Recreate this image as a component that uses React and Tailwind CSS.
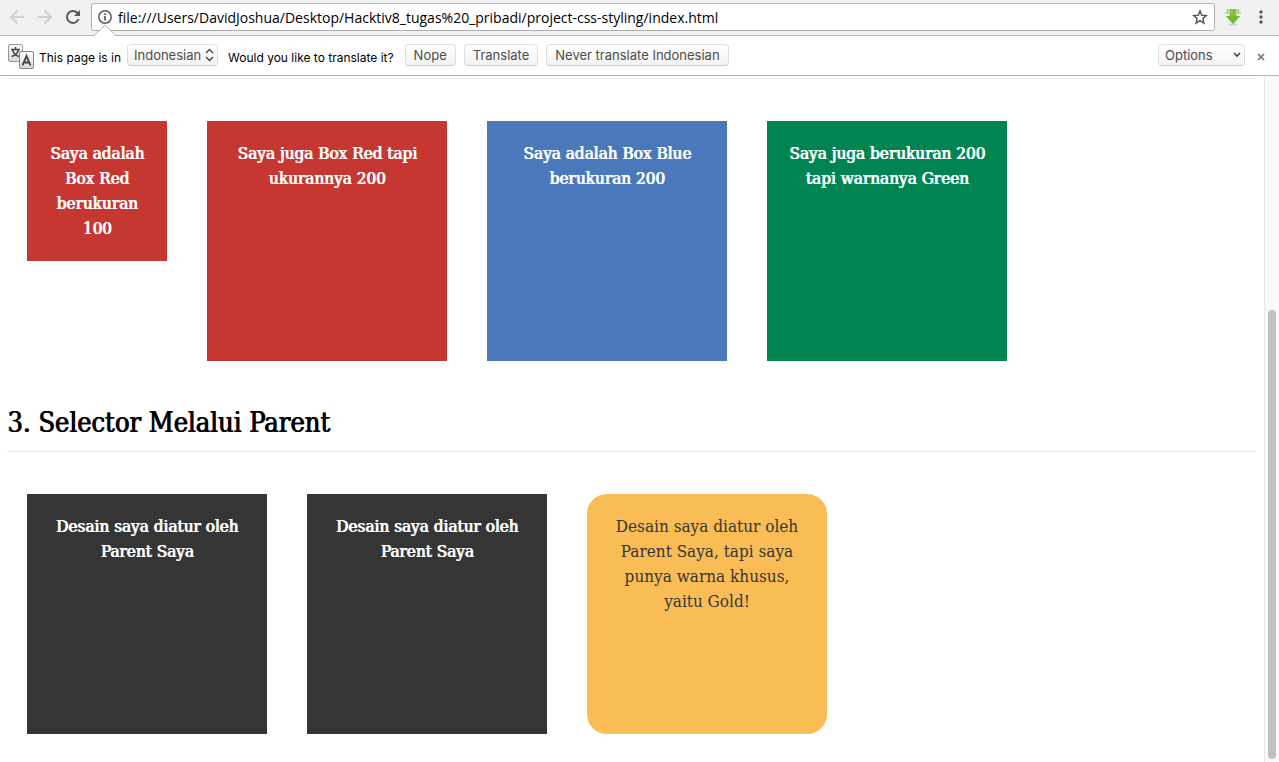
import React from "react";

const slab = "font-['DejaVu_Serif_Condensed','DejaVu_Serif',serif]";
const heavy = "[text-shadow:1px_0_0_currentColor]";

function ToolButton({ label, className = "", children }) {
  return (
    <button type="button" aria-label={label} className={`flex h-6 w-6 items-center justify-center ${className}`}>
      {children}
    </button>
  );
}

function AddressBar() {
  return (
    <header className="flex h-9 shrink-0 items-center border-b border-[#b0b0b0] bg-[#f1f1f1] pr-1.5 pb-px pl-[5px]">
      <nav className="flex gap-1">
        <ToolButton label="Back" className="text-[#d0d0d0]">
          <svg width="16" height="16" viewBox="0 0 16 16" fill="none" stroke="currentColor" strokeWidth="2">
            <path d="M15 8H2.500M8.500 1.500L2 8l6.500 6.500" />
          </svg>
        </ToolButton>
        <ToolButton label="Forward" className="text-[#d0d0d0]">
          <svg width="16" height="16" viewBox="0 0 16 16" fill="none" stroke="currentColor" strokeWidth="2">
            <path d="M1 8h12.500M7.500 1.500L14 8l-6.500 6.500" />
          </svg>
        </ToolButton>
        <ToolButton label="Reload" className="text-[#5a5a5a]">
          <svg width="16" height="16" viewBox="0 0 16 16" fill="none" stroke="currentColor" strokeWidth="2">
            <path d="M13.600 10A6 6 0 1 1 12.300 3.800L13.500 5" />
            <path d="M15 1v6H9z" fill="currentColor" stroke="none" />
          </svg>
        </ToolButton>
      </nav>
      <div className="ml-1.5 flex h-7 flex-1 items-center rounded-[3px] border border-[#b0b0b0] bg-white pr-1.5 pl-1.5">
        <svg width="14" height="14" viewBox="0 0 14 14" fill="none" stroke="#5a5a5a" aria-hidden="true">
          <circle cx="7" cy="7" r="6.200" strokeWidth="1.500" />
          <path d="M7 6v4.500M7 3.300v1.600" strokeWidth="1.700" />
        </svg>
        <input
          aria-label="Address"
          defaultValue="file:///Users/DavidJoshua/Desktop/Hacktiv8_tugas%20_pribadi/project-css-styling/index.html"
          className="ml-1.5 h-5 min-w-0 flex-1 bg-transparent font-['Open_Sans',sans-serif] text-[14px] text-black outline-none"
        />
        <button type="button" aria-label="Bookmark this page">
          <svg width="16" height="16" viewBox="0 0 16 16" fill="none" stroke="#5a5a5a" strokeWidth="1.500">
            <path d="M8 1.900l1.800 4.300 4.500.4-3.400 3 1 4.500L8 11.700l-3.900 2.400 1-4.500-3.400-3 4.500-.4z" />
          </svg>
        </button>
      </div>
      <div className="ml-1.5 flex gap-1">
        <ToolButton label="Downloads">
          <svg width="16" height="18" viewBox="0 0 16 18">
            <ellipse cx="8" cy="16.500" rx="4.500" ry="1" fill="#cfcfcf" />
            <path d="M4.500 1h7v7H15L8 16 1 8h3.500z" fill="#82c341" />
            <path d="M1 8h14l-7 8z" fill="#76b833" />
            <path d="M2 1h1.500v4.500H2zM12.500 1H14v4.500h-1.500zM.5 4h1v2h-1zM14.500 4h1v2h-1z" fill="#8fc955" />
          </svg>
        </ToolButton>
        <ToolButton label="Menu">
          <svg width="4" height="16" viewBox="0 0 4 16" fill="#5a5a5a">
            <circle cx="2" cy="3" r="1.700" />
            <circle cx="2" cy="8" r="1.700" />
            <circle cx="2" cy="13" r="1.700" />
          </svg>
        </ToolButton>
      </div>
    </header>
  );
}

const control =
  "block h-[22px] rounded-[4px] border border-[#e0e0e0] border-b-[#cccccc] bg-linear-to-b from-white to-[#f3f3f3] text-[13px] leading-4 text-[#4d4d4d]";

function TranslateIcon() {
  return (
    <svg width="28" height="28" viewBox="0 0 28 28" aria-hidden="true" className="shrink-0">
      <defs>
        <linearGradient id="key" x1="0" y1="0" x2="0" y2="1">
          <stop offset="0" stopColor="#ffffff" />
          <stop offset="1" stopColor="#d8d8d8" />
        </linearGradient>
      </defs>
      <rect x="1.500" y="2.500" width="14" height="17" rx="1.500" fill="url(#key)" stroke="#969696" />
      <path d="M8.500 5v2.500M4 7.500h9M5.500 8c1 3 3 5.500 6.500 6.500M11.500 8c-1 3-3 5.500-7 6.500" fill="none" stroke="#444" strokeWidth="1.500" />
      <rect x="12.500" y="9.500" width="14" height="17" rx="1.500" fill="url(#key)" stroke="#858585" />
      <path d="M15.500 23.500l4-9.500 4 9.500M17 20.500h5" fill="none" stroke="#444" strokeWidth="1.900" />
    </svg>
  );
}

function TranslateBar() {
  return (
    <section aria-label="Translate" className="relative flex h-10 shrink-0 items-center border-b border-[#b0b0b0] bg-white pr-3.5 pl-[7px] font-[Inter,sans-serif]">
      <svg width="22" height="13" viewBox="0 0 22 13" className="absolute -top-3 left-[94px]" aria-hidden="true">
        <path d="M0 12L11 1l11 11v1H0z" fill="#fff" />
        <path d="M0 11.500L11 1l11 10.500" fill="none" stroke="#b0b0b0" />
      </svg>
      <TranslateIcon />
      <label htmlFor="language" className="mt-1 ml-1 text-[12px] text-black">This page is in</label>
      <div className="relative mb-0.5 ml-1.5">
        <select id="language" className={`${control} w-[91px] appearance-none pl-1.5`}>
          <option>Indonesian</option>
        </select>
        <svg width="9" height="14" viewBox="0 0 9 14" className="pointer-events-none absolute top-1 right-1" fill="none" stroke="#444" strokeWidth="1.400" aria-hidden="true">
          <path d="M1 5l3.500-3.500L8 5M1 9l3.500 3.500L8 9" />
        </svg>
      </div>
      <p className="mt-1 ml-2.5 text-[12px] text-black">Would you like to translate it?</p>
      <div className="mb-0.5 ml-[11px] flex gap-2">
        <button type="button" className={`${control} px-2`}>Nope</button>
        <button type="button" className={`${control} px-2`}>Translate</button>
        <button type="button" className={`${control} px-2`}>Never translate Indonesian</button>
      </div>
      <div className="relative mb-0.5 ml-auto">
        <select aria-label="Options" className={`${control} w-[87px] appearance-none pl-1.5`}>
          <option>Options</option>
        </select>
        <svg width="8" height="6" viewBox="0 0 8 6" className="pointer-events-none absolute top-2 right-1" fill="none" stroke="#444" strokeWidth="1.600" aria-hidden="true">
          <path d="M1 1l3 3 3-3" />
        </svg>
      </div>
      <button type="button" aria-label="Close" className="mt-0.5 ml-3">
        <svg width="8" height="8" viewBox="0 0 8 8" stroke="#777" strokeWidth="1.700">
          <path d="M1 1l6 6M7 1L1 7" />
        </svg>
      </button>
    </section>
  );
}

function Box({ size = "h-60 w-60", look, children }) {
  return (
    <div className={`${size} ${look} shrink-0 p-5 text-center text-[17px] leading-[25px]`}>{children}</div>
  );
}

export default function App() {
  return (
    <div className="flex h-screen flex-col overflow-hidden bg-white">
      <AddressBar />
      <TranslateBar />
      <div className="flex min-h-0 flex-1">
        <main className={`min-w-0 flex-1 overflow-hidden pt-0.5 pr-2 pl-[7px] ${slab}`}>
          <hr className="border-[#e3e3e3]" />
          <div className="mt-[42px] flex items-start gap-10 px-5">
            <Box size="h-[140px] w-[140px]" look={`bg-[#c53730] text-white ${heavy}`}>Saya adalah Box Red berukuran 100</Box>
            <Box look={`bg-[#c53730] text-white ${heavy}`}>Saya juga Box Red tapi ukurannya 200</Box>
            <Box look={`bg-[#4a78ba] text-white ${heavy}`}>Saya adalah Box Blue berukuran 200</Box>
            <Box look={`bg-[#008552] text-white ${heavy}`}>Saya juga berukuran 200 tapi warnanya Green</Box>
          </div>
          <h1 className={`mt-[42px] text-[27px] leading-10 text-black ${heavy}`}>3. Selector Melalui Parent</h1>
          <hr className="mt-2 border-[#e3e3e3]" />
          <div className="mt-[42px] flex items-start gap-10 px-5">
            <Box look={`bg-[#353535] text-white ${heavy}`}>Desain saya diatur oleh Parent Saya</Box>
            <Box look={`bg-[#353535] text-white ${heavy}`}>Desain saya diatur oleh Parent Saya</Box>
            <Box look="rounded-[20px] bg-[#fabd55] text-[#353535]">Desain saya diatur oleh Parent Saya, tapi saya punya warna khusus, yaitu Gold!</Box>
          </div>
        </main>
        <div className="flex w-[15px] flex-col items-center justify-end border-l border-[#e8e8e8] bg-[#fafafa] pb-[3px]" aria-hidden="true">
          <div className="h-[65.7%] w-2 rounded-full bg-[#c1c1c1]" />
        </div>
      </div>
    </div>
  );
}
